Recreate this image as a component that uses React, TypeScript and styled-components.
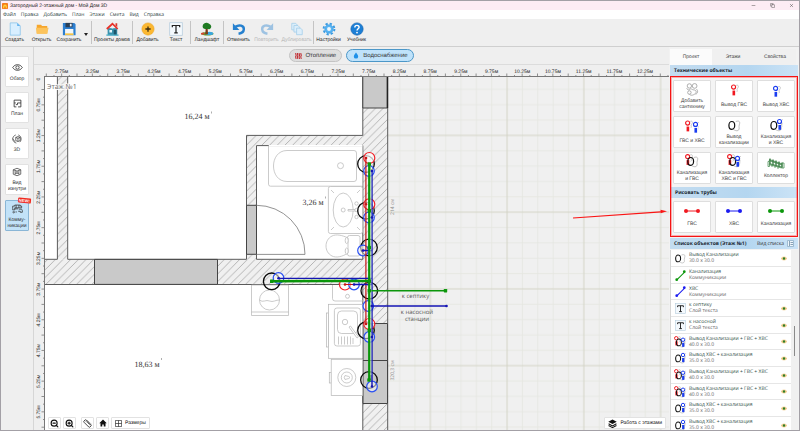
import React from "react";
import styled, { createGlobalStyle, css } from "styled-components";
import { ZoomIn, ZoomOut, Ruler, Minus, Copy, X } from "lucide-react";

const Global = createGlobalStyle`
  *, *::before, *::after { box-sizing: border-box; }
  html, body, #root { height: 100%; }
  body { margin: 0; overflow: hidden; }
  button { font: inherit; color: inherit; margin: 0; padding: 0; border: 0; background: none; cursor: pointer; }
  svg { display: block; flex: none; }
  ul { list-style: none; margin: 0; padding: 0; }
`;

const wideFont = css`font-family: "Open Sans", "Noto Sans", sans-serif;`;

/* ---------- frame ---------- */
const Window = styled.div`
  display: flex;
  flex-direction: column;
  height: 100vh;
  border: 1px solid #a3a0a6;
  background: #efefef;
  color: #333;
  font: 5px/6px "Liberation Sans", Roboto, sans-serif;
  text-rendering: geometricPrecision;
  button { text-rendering: inherit; }
`;
const TitleBar = styled.header`
  display: flex;
  align-items: center;
  height: 9px;
  padding: 0 5px 0 1px;
  gap: 2px;
  background: #fdecf4;
`;
const Title = styled.h1`
  flex: 1;
  margin: 0;
  font-size: 5px;
  font-weight: 400;
  line-height: 8px;
  color: #222;
`;
const WindowButtons = styled.div`
  display: flex;
  gap: 14px;
`;
const MenuBar = styled.nav`
  ${wideFont}
  display: flex;
  align-items: center;
  height: 9px;
  padding: 0 2px;
  gap: 5px;
  background: #fff;
  color: #1f3a3a;
`;
const ToolBar = styled.div`
  display: flex;
  align-items: stretch;
  height: 28px;
  border-bottom: 1px solid #cfcfcf;
  background: #efefef;
`;
const ToolButton = styled.button<{ $width: number }>`
  display: flex;
  flex-direction: column;
  align-items: center;
  width: ${(p) => p.$width}px;
  padding-top: 3px;
  gap: 1px;
  white-space: nowrap;
  color: #222;
  &:disabled { color: #b5b5b5; }
`;
const Separator = styled.span`
  width: 1px;
  margin: 2px 0;
  background: #c4c4c4;
`;
const Caret = styled.button`
  width: 8px;
  padding: 4px 0 0 1px;
`;
const Body = styled.div`
  display: flex;
  flex: 1;
  min-height: 0;
`;

/* ---------- view switcher ---------- */
const Sidebar = styled.nav`
  display: flex;
  flex-direction: column;
  gap: 5px;
  width: 33px;
  padding: 9px 4px;
  border-right: 1px solid #d6d6d6;
`;
const ViewButton = styled.button<{ $active?: boolean }>`
  position: relative;
  display: flex;
  flex-direction: column;
  align-items: center;
  justify-content: center;
  gap: 3px;
  height: 31px;
  border: 1px solid ${(p) => (p.$active ? "#8ab6d6" : "#e2e2e2")};
  border-radius: 1px;
  background: ${(p) => (p.$active ? "#c2e2f8" : "#fff")};
`;
const NewBadge = styled.span`
  position: absolute;
  top: -3px;
  right: -3px;
  padding: 0 1px;
  border-radius: 1px;
  background: #f02a20;
  color: #fff;
  font-size: 4px;
  font-weight: 700;
  line-height: 5px;
  transform: rotate(6deg);
`;

/* ---------- drawing area ---------- */
const Stage = styled.main`
  display: flex;
  flex-direction: column;
  flex: 1;
  min-width: 0;
`;
const LayerBar = styled.div`
  display: flex;
  justify-content: center;
  align-items: center;
  gap: 4px;
  height: 18px;
  border-bottom: 1px solid #dcdcdc;
`;
const Pill = styled.button<{ $active?: boolean }>`
  display: flex;
  align-items: center;
  gap: 3px;
  height: 13px;
  padding: 0 5px;
  border: 1px solid ${(p) => (p.$active ? "#4c97c8" : "#c4c4c4")};
  border-radius: 7px;
  background: ${(p) => (p.$active ? "#bfe2fa" : "#dedede")};
  font-size: 6px;
  line-height: 8px;
  color: #333;
`;
const TopRuler = styled.div`
  height: 12px;
  border-bottom: 1px solid #777;
  margin-left: 10px;
`;
const RulerSvg = styled.svg`
  width: 100%;
  height: 100%;
`;
const PlanRow = styled.div`
  display: flex;
  flex: 1;
  min-height: 0;
`;
const SideRuler = styled.div`
  width: 11px;
  border-right: 1px solid #777;
`;
const PlanArea = styled.div`
  position: relative;
  flex: 1;
  min-width: 0;
  overflow: hidden;
`;
const PlanSvg = styled.svg`
  ${wideFont}
  width: 100%;
  height: 100%;
`;
const FloatingTools = styled.div<{ $side: "left" | "right" }>`
  position: absolute;
  bottom: 1px;
  ${(p) => (p.$side === "left" ? css`left: 3px;` : css`right: 3px;`)}
  display: flex;
  gap: 2px;
`;
const FloatButton = styled.button<{ $spaced?: boolean; $labelled?: boolean }>`
  display: flex;
  align-items: center;
  justify-content: center;
  gap: 3px;
  height: 12px;
  width: ${(p) => (p.$labelled ? "auto" : "13px")};
  padding: ${(p) => (p.$labelled ? "0 3px" : "0")};
  margin-left: ${(p) => (p.$spaced ? 3 : 0)}px;
  border: 1px solid #e2e2e2;
  border-radius: 1px;
  background: #fff;
  color: #111;
`;

/* ---------- project panel ---------- */
const Panel = styled.aside`
  display: flex;
  flex-direction: column;
  width: 130px;
  padding: 2px 1px 0 1px;
  background: #f2f2f2;
`;
const Tabs = styled.div`
  display: grid;
  grid-template-columns: repeat(3, 1fr);
  height: 16px;
  margin-right: 2px;
`;
const Tab = styled.button<{ $active?: boolean }>`
  background: ${(p) => (p.$active ? "#fbfbfb" : "#f0f0f0")};
  color: #444;
`;
const SectionHead = styled.div`
  display: flex;
  align-items: center;
  justify-content: space-between;
  height: 11px;
  padding: 0 4px;
  background: linear-gradient(90deg, #c3dcf0, #b4d6f0 60%, #cbe3f6);
`;
const SectionTitle = styled.h2`
  ${wideFont}
  margin: 0;
  font-size: 5px;
  font-weight: 700;
  line-height: 8px;
  color: #16242e;
`;
const Highlighted = styled.section`
  border: 1px solid #f51414;
  outline: 1px solid rgba(255, 40, 40, 0.35);
  outline-offset: -2px;
`;
const CardGrid = styled.div`
  display: grid;
  grid-template-columns: repeat(3, 1fr);
  gap: 4px;
  padding: 3px 2px;
  background: #f4f4f4;
`;
const Card = styled.button`
  display: flex;
  flex-direction: column;
  align-items: center;
  justify-content: space-evenly;
  height: 32px;
  border: 1px solid #dedede;
  border-radius: 1px;
  background: #fff;
  color: #444;
`;
const ListHead = styled(SectionHead)`
  margin-top: 1px;
`;
const ListMode = styled.button`
  ${wideFont}
  display: flex;
  align-items: center;
  gap: 3px;
`;
const ListArea = styled.div`
  ${wideFont}
  display: flex;
  flex: 1;
  min-height: 0;
  margin-top: 1px;
  background: #f0f0f0;
`;
const ObjectList = styled.ul`
  flex: 1;
  overflow: hidden;
  border-left: 1px solid #d5d5d5;
  background: #fff;
`;
const ObjectRow = styled.li`
  display: flex;
  align-items: center;
  height: 17px;
  padding: 0 4px 0 3px;
  gap: 3px;
  border-bottom: 1px solid #e6e6e6;
  &:nth-child(3n) { height: 16px; }
`;
const ObjectIcon = styled.span`
  display: flex;
  justify-content: center;
  width: 12px;
`;
const ObjectText = styled.div`
  flex: 1;
  white-space: nowrap;
`;
const ObjectName = styled.div`
  color: #33524a;
`;
const ObjectNote = styled.div`
  color: #666;
`;
const ScrollTrack = styled.div`
  width: 7px;
  padding: 76px 3px 0;
`;
const ScrollThumb = styled.div`
  height: 30px;
  background: #8a8a8a;
`;

/* ---------- icons ---------- */
const Svg16 = ({ size = 14, children }: { size?: number; children: React.ReactNode }) => (
  <svg width={size} height={size} viewBox="0 0 16 16" fill="none" aria-hidden="true">{children}</svg>
);

const NewFileIcon = () => (
  <Svg16><path d="M2.500 1h8l3.500 3.500V15h-11.500z" fill="#d9efff" stroke="#7dbdea" strokeWidth="0.800" /><path d="M10.500 1v3.500H14z" fill="#63b4f0" /></Svg16>
);
const FolderIcon = () => (
  <Svg16><path d="M2 3h5l1 1.500h6V13H2z" fill="#f6a62c" /><path d="M1 6.500h14.500L14 13.500H2z" fill="#fcc35c" /></Svg16>
);
const DiskIcon = () => (
  <Svg16><path d="M1 1h13l1.500 1.500V15H1z" fill="#2c7fd0" /><path d="M4 1h8v5H4z" fill="#2b3f55" /><path d="M9 2h2v3H9z" fill="#e8f2fa" /><path d="M3.500 8h9.500v7H3.500z" fill="#f2f6fa" /><path d="M3.500 13h9.500v2H3.500z" fill="#f4c244" /></Svg16>
);
const HouseIcon = () => (
  <Svg16><path d="M3 7h11v8H3z" fill="#3a92ad" /><path d="M2 8 8.500 2l6 6" stroke="#e8332a" strokeWidth="2" /><path d="M12 1.500h2V6l-2-2z" fill="#d8382c" /><path d="M5 9h3v3H5zM7.500 5.500h2v2h-2z" fill="#e6f6fb" /><path d="M10 9h3v6h-3z" fill="#1d566b" /><path d="M1.500 15h14" stroke="#4eb0c9" strokeWidth="1.500" /></Svg16>
);
const AddIcon = () => (
  <Svg16><circle cx="8" cy="8" r="7" fill="#fbb832" stroke="#e9a01c" strokeWidth="0.600" /><path d="M8 5v6M5 8h6" stroke="#3b2c10" strokeWidth="1.500" /></Svg16>
);
const LetterT = ({ size = 14 }: { size?: number }) => (
  <Svg16 size={size}><rect x="0.800" y="0.800" width="14.400" height="14.400" fill="#f4f9fd" stroke="#b6cddd" strokeWidth="0.900" /><path d="M3.800 6V4h8.400v2M8 4v8.500M6 12.500h4" stroke="#222" strokeWidth="1.400" /></Svg16>
);
const LandscapeIcon = () => (
  <Svg16><ellipse cx="8.500" cy="13.500" rx="7" ry="2" fill="#5d9a2f" /><ellipse cx="11" cy="13" rx="4" ry="1.800" fill="#39a6df" /><path d="M6.500 7h2.200l.5 7H6z" fill="#7a3c18" /><path d="M3 5c0-3 3-4.500 5.500-4S14 4 12.500 6.500 9.500 8 8 8 3 8 3 5z" fill="#1f7a22" /><path d="M1 12.500l3.500-.5 1 2-4 .5z" fill="#d9432e" /></Svg16>
);
const UndoIcon = ({ flip, faded }: { flip?: boolean; faded?: boolean }) => (
  <Svg16><g transform={flip ? "matrix(-1 0 0 1 16 0)" : undefined} opacity={faded ? 0.4 : 1}><path d="M4 5.500C8 2.500 14 4 13.500 8.500 13.300 11.500 10.500 13 7.500 13.500" stroke="#2580cf" strokeWidth="2.800" /><path d="M1 1.500v7.500h7.500z" fill="#2580cf" /></g></Svg16>
);
const DuplicateIcon = () => (
  <Svg16><g fill="#dceefa" stroke="#a3cfea" strokeWidth="0.900"><path d="M2 1.500h4.500l2 2V9H2z" /><path d="M4.500 4H9l2 2v5.500H4.500z" /><path d="M7.500 7h4.500l2 2v5.500H7.500z" /></g></Svg16>
);
const GearIcon = () => (
  <Svg16><circle cx="8" cy="8" r="6.200" stroke="#3a9be2" strokeWidth="2.200" strokeDasharray="2.600 2.270" /><circle cx="8" cy="8" r="4.800" fill="#58b4f2" stroke="#3a9be2" strokeWidth="0.800" /><circle cx="8" cy="8" r="2.200" fill="#eef7fd" /></Svg16>
);
const HelpIcon = () => (
  <Svg16><circle cx="8" cy="8" r="7" fill="#1c7fd6" stroke="#1566b2" strokeWidth="0.800" /><path d="M5.500 6.200C5.500 3 10.500 3.200 10.400 6 10.300 7.600 8 7.800 8 9.700" stroke="#fff" strokeWidth="1.700" /><circle cx="8" cy="12" r="1" fill="#fff" /></Svg16>
);
const AppIcon = () => (
  <Svg16 size={6}><rect width="16" height="16" rx="2" fill="#f57c1a" /><path d="M3 14V7l5-4 5 4v7h-3V9H6v5z" fill="#ffd23c" /></Svg16>
);

const EyeIcon = () => (
  <Svg16 size={11}><g stroke="#333" strokeWidth="1.200"><path d="M1 8c3.500-5.500 10.500-5.500 14 0-3.500 5.500-10.500 5.500-14 0z" /><circle cx="8" cy="8" r="2.400" /></g></Svg16>
);
const PlanIcon = () => (
  <Svg16 size={9}><path d="M2 2h12v12H9M2 2v12h4M2 7h3M8 7h6M8 7v3M5 10h3" stroke="#333" strokeWidth="1.500" /></Svg16>
);
const CubeOrbitIcon = () => (
  <Svg16 size={10}><g stroke="#333" strokeWidth="1.100"><path d="M6 5.500 9.500 4 13 5.500v5L9.500 12 6 10.500zM6 5.500 9.500 7 13 5.500M9.500 7v5" /><path d="M6 1.500C-1 4 0 13 7 14.500M10 1.500c5 1.500 6 8 2.500 11.500M1 7.500l4 5" /></g></Svg16>
);
const RoomIcon = () => (
  <Svg16 size={10}><g stroke="#333" strokeWidth="1.100"><path d="M2 4.500 8 2l6 2.500v7L8 14l-6-2.500zM2 4.500l6 2 6-2M5 6v6M11 6v6M5 10h6M8 6.500V10" /></g></Svg16>
);
const PipesIcon = () => (
  <Svg16 size={11}><g stroke="#333" strokeWidth="1.100"><path d="M1 8V4.500h3V3h8v1.500h2V7H4v3H1zM6 3v4M10 3v4M4 8.500h5M10 9h3.500c1 0 1.500 1 1.500 2v2.500h-3V12H9M2 12c-1 1.500-.5 2.500.5 2.500s1.500-1 .5-2.500M6 12v2" /></g></Svg16>
);
const HeatIcon = () => (
  <svg width="7" height="6" viewBox="0 0 16 14" aria-hidden="true"><path d="M2 0c-2 3 2 4 0 7s1 4 0 7M6 0c-2 3 2 4 0 7s1 4 0 7M10 0c-2 3 2 4 0 7s1 4 0 7M14 0c-2 3 2 4 0 7s1 4 0 7" fill="none" stroke="#c0272d" strokeWidth="2.400" /></svg>
);
const DropIcon = () => (
  <svg width="8" height="7" viewBox="-2 0 16 16" aria-hidden="true"><path d="M6 1c2 3.500 5 5.500 5 9a5 5 0 0 1-10 0c0-3.500 3-5.500 5-9z" fill="#1e90e8" /></svg>
);
const HomeSolid = () => (
  <Svg16 size={8}><path d="M8 1 15.500 8.500H13V15H9.500v-4h-3v4H3V8.500H.5z" fill="#111" /></Svg16>
);
const SizesIcon = () => (
  <Svg16 size={7}><path d="M1 1h14v14H1zM8 1v14M1 8h14" stroke="#222" strokeWidth="1.500" /></Svg16>
);
const LayersSolid = () => (
  <Svg16 size={9}><path d="M8 1l7.500 4L8 9 .5 5z" fill="#111" /><path d="M1 8.500l7 3.800 7-3.800M1 11.500l7 3.800 7-3.800" stroke="#111" strokeWidth="1.800" /></Svg16>
);
const VisibleIcon = () => (
  <svg width="6" height="5" viewBox="0 0 12 10" aria-hidden="true"><path d="M0 5C3 1 9 1 12 5 9 9 3 9 0 5z" fill="#fad9a0" stroke="#e8ae50" strokeWidth="1" /><circle cx="6" cy="5" r="2.400" fill="#2f7d2a" /></svg>
);

type OutletKind = { drain?: boolean; hot?: boolean; cold?: boolean };
const Riser = ({ x, y, color }: { x: number; y: number; color: string }) => (
  <g>
    <path d={`M${x + 3} ${y - 2}c3-1 3 2 1.500 3.500s1 3-1 4`} stroke="#aaa" strokeWidth="0.700" />
    <path d={`M${x - 1.200} ${y + 4}h3v5.500h-3z`} fill={color} />
    <circle cx={x} cy={y} r="2.300" fill="#fff" stroke={color} strokeWidth="1.300" />
  </g>
);
const OutletIcon = ({ drain, hot, cold, size = 14 }: OutletKind & { size?: number }) => {
  const single = !drain && !(hot && cold);
  return (
    <Svg16 size={size}>
      {drain && hot && <Riser x={3} y={3} color="#f01820" />}
      {!drain && hot && <Riser x={single ? 7.500 : 3} y={3.500} color="#f01820" />}
      {drain && <path d="M10 4c5-1.500 5 1 4 4s1 4-1 6c-2 1.500-4 0-6-1" stroke="#a6a6a6" strokeWidth="0.800" />}
      {drain && <ellipse cx={hot ? 6.500 : 5.500} cy="8.500" rx="3.300" ry="4.500" stroke="#111" strokeWidth="1.400" />}
      {cold && <Riser x={single ? 7.500 : 12} y={drain && !hot ? 4 : 5} color="#1b3df0" />}
    </Svg16>
  );
};
const PlumbingIcon = () => (
  <Svg16><g stroke="#999" strokeWidth="0.900"><circle cx="5" cy="4.500" r="2.500" /><circle cx="11" cy="4.500" r="2.700" /><path d="M2 7c1 3 3 2 4 1s2 1 4 1 4 2 2 4-5 3-7 1M13 8c2 2 2 5-1 6" /><circle cx="5" cy="12" r="2" /></g></Svg16>
);
const ManifoldIcon = () => (
  <svg width="18" height="13" viewBox="0 0 18 13" fill="none" aria-hidden="true">
    <path d="M2 3l13 4.500M2 7l13 3.500" stroke="#6aa172" strokeWidth="2" />
    <path d="M3 1.500V7M6 2.500V8M9 3.500V9M12 4.500V10M15 5.500v5" stroke="#3d7f47" strokeWidth="1.300" />
    <path d="M1 4.500h1.500v5H1zM5 7v3M8 8v3M11 9v3M15 6h2v5h-2z" stroke="#4f9159" strokeWidth="0.800" />
  </svg>
);
const PipeIcon = ({ color }: { color: string }) => (
  <svg width="18" height="8" viewBox="0 0 18 8" aria-hidden="true"><path d="M2 4h14" stroke={color} strokeWidth="1" /><circle cx="3" cy="4" r="2" fill={color} /><circle cx="15" cy="4" r="2" fill={color} /></svg>
);
const DiagonalPipe = ({ color }: { color: string }) => (
  <Svg16 size={11}><path d="M3 14 14 3" stroke={color} strokeWidth="1.500" /><circle cx="2.500" cy="14" r="2" fill={color} /><circle cx="13.500" cy="2.500" r="2" fill={color} /></Svg16>
);

/* ---------- rulers ---------- */
const STEP = 30.7;
const HorizontalRuler = () => (
  <TopRuler>
    <RulerSvg>
      {Array.from({ length: 82 }, (_, i) => {
        const x = 2.300 + (i * STEP) / 4;
        return <path key={i} d={`M${x} ${i % 2 ? 10 : 8.500}V12`} stroke="#666" strokeWidth="0.700" />;
      })}
      {Array.from({ length: 20 }, (_, i) => (
        <text key={i} x={17.700 + i * STEP} y="8" textAnchor="middle" fontSize="5" fill="#222">{(2.75 + i * 0.5).toFixed(2)}м</text>
      ))}
    </RulerSvg>
  </TopRuler>
);
const VerticalRuler = () => (
  <SideRuler>
    <RulerSvg>
      {Array.from({ length: 48 }, (_, i) => {
        const y = 12.500 + (i * STEP) / 4;
        return <path key={i} d={`M${i % 2 ? 9 : 7.500} ${y}H11`} stroke="#666" strokeWidth="0.700" />;
      })}
      <text transform="translate(6 2) rotate(-90)" textAnchor="middle" fontSize="5" fill="#222">0</text>
      {Array.from({ length: 11 }, (_, i) => (
        <text key={i} transform={`translate(6 ${28 + i * STEP}) rotate(-90)`} textAnchor="middle" fontSize="5" fill="#222">{(0.75 + i * 0.5).toFixed(2)}м</text>
      ))}
    </RulerSvg>
  </SideRuler>
);

/* ---------- floor plan ---------- */
const drains = [[366, 164], [366, 210.7], [369, 247.5], [271.7, 281.3], [369.3, 290.7], [366, 330.3], [369, 380]];
const hotOutlets = [[369.3, 158], [369.3, 204.3], [345, 284.5], [369.3, 324]];
const coldOutlets = [[369, 171], [369, 217.5], [363, 250.5], [278.5, 278], [354, 284.5], [368.3, 306], [369.3, 337], [372, 386.5]];
const greenJoints = [[369.3, 164], [369.3, 210.7], [369.3, 247.5], [271.7, 281.3], [369.3, 281], [369.3, 290.7], [369.3, 330.3], [369, 380], [445.5, 290.7]];
const blueJoints = [[372, 171], [372, 217.5], [363, 250.5], [278.5, 278.3], [354, 284.5], [372, 306], [372, 337], [372, 386.5], [446.5, 306]];
const redJoints = [[366, 158], [366, 204.3], [345, 284.5], [366, 324]];

const FloorPlan = () => (
  <PlanSvg role="img" aria-label="План этажа">
    <defs>
      <pattern id="grid" x="46.600" y="58.650" width="76.750" height="76.750" patternUnits="userSpaceOnUse">
        {[1, 2, 3, 4].map((n) => (
          <path key={n} d={`M${n * 15.350} 0V76.750M0 ${n * 15.350}H76.750`} stroke="#e5e6e0" strokeWidth="0.800" />
        ))}
        <path d="M0 0V76.750M0 0H76.750M76.750 0V76.750M0 76.750H76.750" stroke="#d3d4c6" strokeWidth="1" />
      </pattern>
      <pattern id="hatch" width="7.680" height="7.680" patternUnits="userSpaceOnUse">
        <rect width="7.680" height="7.680" fill="#f0f0f0" />
        <path d="M-1 8.680 8.680-1M-1 1 1-1M6.680 8.680l2-2" stroke="#8c8c8c" strokeWidth="0.600" />
      </pattern>
    </defs>
    <g transform="translate(-45 -77)" fill="none">
      <rect x="45" y="77" width="4000" height="4000" fill="#f0f0f0" />
      <rect x="45" y="77" width="4000" height="4000" fill="url(#grid)" />
      <rect x="45" y="77" width="318" height="4000" fill="#fff" />

      {/* walls */}
      <g fill="url(#hatch)">
        <path d="M57.500 77h10.200v182.500H57.500z" />
        <path d="M45 259.400h318v25H45z" />
        <path d="M246.500 135.400h116.300v10.200H256.500v114h-10z" />
        <path d="M362.800 77h25v4000h-25z" />
      </g>
      <g stroke="#5a5a5a" strokeWidth="1">
        <path d="M57.400 77v182.300H45M67.700 77v182.300h178.800V135.400h116.300V77" />
        <path d="M362.800 145.600H256.500v113.700h106.300V145.600" />
        <path d="M45 284.500h317.800V4000M387.700 77v4000" />
      </g>
      <g fill="#c9c9c9" stroke="#444" strokeWidth="1">
        <path d="M94.500 259.400h123v25h-123z" />
        <path d="M246.500 205.300h10v49h-10z" />
        <path d="M362.800 76h24.700v32h-24.700z" />
        <path d="M363 323.500h24.500v37H363zM363 360.500h24.500v43H363z" />
      </g>
      <path d="M387.400 77v31" stroke="#222" strokeWidth="1.500" />

      {/* door */}
      <path d="M256.500 205.300A48.500 49 0 0 1 305 254.400h-48.500" stroke="#777" strokeWidth="0.800" />

      {/* bathroom */}
      <g stroke="#b4b4b4" strokeWidth="0.700" fill="#fff">
        <path d="M268.500 145.800h94v40.400h-92q-2 0-2-2z" />
        <path d="M287 150.500h67q2.500 0 2.500 2.500v26q0 2.500-2.500 2.500h-67c-18 0-18-31 0-31z" />
        <circle cx="340.500" cy="165.700" r="3" />
        <rect x="328.400" y="186.500" width="34.200" height="47" rx="2" />
        <ellipse cx="343.200" cy="210" rx="10" ry="17" />
        <circle cx="343.200" cy="210" r="2" />
        <path d="M348 209.500h9v1.500h-9zM331 190l3 3M331 230l3-3M360 190l-3 3M360 230l-3-3" />
        <circle cx="356.500" cy="203.500" r="1.700" /><circle cx="356.500" cy="210" r="1.700" /><circle cx="356.500" cy="217" r="1.700" />
        <rect x="347.500" y="235.500" width="12.500" height="20.500" rx="2" />
        <path d="M348 238c-6-3-12-4-16-2-8 4-8 16 0 20 4 2 10 1 16-3z" />
        <ellipse cx="346.700" cy="240.500" rx="1.500" ry="3" /><ellipse cx="346.700" cy="251" rx="1.500" ry="3" />
      </g>
      <path d="M269 145.600h93.500" stroke="#fff" strokeWidth="1.200" />

      {/* kitchen */}
      <g stroke="#b4b4b4" strokeWidth="0.700" fill="#fff">
        <path d="M251.500 285h37v30.500h-37zM251.500 312h37" />
        <circle cx="269.500" cy="300" r="10" />
        <path d="M259.500 300q2.500 2 5 1t5 0 5 0 5-1" />
        <path d="M332.500 285v13.500q0 2.500 2.500 2.500h27.700" />
        <circle cx="347.500" cy="296.300" r="2" />
        <rect x="326.500" y="313" width="2" height="34" />
        <rect x="328.400" y="304.300" width="34.200" height="54" />
        <rect x="334.400" y="308" width="26" height="38" rx="2.500" />
        <rect x="337.500" y="311" width="20" height="22.500" rx="4" />
        <circle cx="345" cy="322" r="2.700" />
        <path d="M349 327l1.500-1 8 11-1.500 1zM338.500 336.500v8M341.500 336.500v8M344.500 336.500v8M347.500 336.500v8M350.500 336.500v8M353 338v6" />
        <rect x="329.300" y="372.500" width="2" height="10.500" />
        <rect x="331.200" y="359.300" width="31.500" height="36.200" />
        <circle cx="346.800" cy="377.500" r="9" /><circle cx="346.800" cy="377.500" r="5.500" />
        <path d="M345 375.500q5 1 5 2t-5 2q-1.500-2 0-4z" />
      </g>

      {/* pipes */}
      {drains.map(([cx, cy]) => <circle key={`${cx}-${cy}`} cx={cx} cy={cy} r="8.300" stroke="#0b0b0b" strokeWidth="1.300" />)}
      {hotOutlets.map(([cx, cy]) => <circle key={`${cx}-${cy}`} cx={cx} cy={cy} r="5.500" fill="#fff" fillOpacity="0.7" stroke="#f22028" strokeWidth="1.200" />)}
      {coldOutlets.map(([cx, cy]) => <circle key={`${cx}-${cy}`} cx={cx} cy={cy} r="5.300" fill="#fff" fillOpacity="0.5" stroke="#2a50f2" strokeWidth="1.200" />)}
      <path d="M365.900 158v166M345 284.500h21" stroke="#c81414" strokeWidth="1.200" />
      <path d="M372 171v215.500M278.500 278.400H372M354 284.500h18M370 306h76.500M363 250.500h9" stroke="#1515b4" strokeWidth="1.400" />
      <path d="M369.300 164v216M271.700 281.300l97.600-.5" stroke="#0b960b" strokeWidth="2.400" />
      <path d="M369.300 290.700h76.200" stroke="#0b960b" strokeWidth="1.600" />
      <path d="M370.900 170v205" stroke="#d4f2d4" strokeWidth="0.700" />
      {greenJoints.map(([x, y]) => <rect key={`${x}-${y}`} x={x - 1.700} y={y - 1.700} width="3.400" height="3.400" rx="0.600" fill="#0b960b" />)}
      {blueJoints.map(([x, y]) => <circle key={`${x}-${y}`} cx={x} cy={y} r="1.300" fill="#1515b4" />)}
      {redJoints.map(([x, y]) => <circle key={`${x}-${y}`} cx={x} cy={y} r="1.300" fill="#c81414" />)}

      {/* labels */}
      <text x="47" y="88.500" fontSize="7" fill="#666" stroke="#fff" strokeWidth="1.500" paintOrder="stroke">Этаж №1</text>
      <g fill="#333" fontSize="8" fontFamily="'Liberation Serif', serif">
        <text x="184.500" y="119">16,24 м</text>
        <text x="302.500" y="205">3,26 м</text>
        <text x="134.500" y="366.500">18,63 м</text>
      </g>
      <path d="M211.500 111.500v2M325.500 196.500v2M161.500 358v2" stroke="#777" strokeWidth="0.600" />
      <g fill="#555" fontSize="6" textAnchor="middle">
        <text x="415.500" y="298">к септику</text>
        <text x="417" y="314">к насосной</text>
        <text x="417" y="321">станции</text>
        <text fill="#888" fontSize="5" transform="translate(394 207) rotate(-90)">214 см</text>
        <text fill="#888" fontSize="5" transform="translate(394 370.500) rotate(-90)">320,3 см</text>
      </g>

      {/* pointer */}
      <path d="M573 218l88-6.200" stroke="#fa1414" strokeWidth="1.200" />
      <path d="M660.500 209.800l6.500 1.400-6.200 2z" fill="#fa1414" />
    </g>
  </PlanSvg>
);

/* ---------- data ---------- */
const menu = ["Файл", "Правка", "Добавить", "План", "Этажи", "Смета", "Вид", "Справка"];

const views = [
  { icon: <EyeIcon />, label: ["Обзор"] },
  { icon: <PlanIcon />, label: ["План"] },
  { icon: <CubeOrbitIcon />, label: ["3D"] },
  { icon: <RoomIcon />, label: ["Вид", "изнутри"] },
  { icon: <PipesIcon />, label: ["Комму-", "никации"], active: true },
];

const objects = [
  { icon: <PlumbingIcon />, label: ["Добавить", "сантехнику"] },
  { icon: <OutletIcon hot />, label: ["Вывод ГВС"] },
  { icon: <OutletIcon cold />, label: ["Вывод ХВС"] },
  { icon: <OutletIcon hot cold />, label: ["ГВС и ХВС"] },
  { icon: <OutletIcon drain />, label: ["Вывод", "канализации"] },
  { icon: <OutletIcon drain cold />, label: ["Канализация", "и ХВС"] },
  { icon: <OutletIcon drain hot />, label: ["Канализация", "и ГВС"] },
  { icon: <OutletIcon drain hot cold />, label: ["Канализация", "ХВС и ГВС"] },
  { icon: <ManifoldIcon />, label: ["Коллектор"] },
];

const pipes = [
  { color: "#f01820", label: "ГВС" },
  { color: "#1b1bf0", label: "ХВС" },
  { color: "#0b960b", label: "Канализация" },
];

const allOutlets = { icon: <OutletIcon drain hot cold size={12} />, name: "Вывод Канализации + ГВС + ХВС", note: "40.0 x 30.0", eye: true };
const coldOutlet = { icon: <OutletIcon drain cold size={12} />, name: "Вывод ХВС + канализация", note: "35.0 x 30.0", eye: true };
const listed = [
  { icon: <OutletIcon drain size={12} />, name: "Вывод Канализации", note: "30.0 x 30.0", eye: true },
  { icon: <DiagonalPipe color="#0b960b" />, name: "Канализация", note: "Коммуникации" },
  { icon: <DiagonalPipe color="#1b1bf0" />, name: "ХВС", note: "Коммуникации" },
  { icon: <LetterT size={11} />, name: "к септику", note: "Слой текста", eye: true },
  { icon: <LetterT size={11} />, name: "к насосной", note: "Слой текста", eye: true },
  allOutlets, coldOutlet, allOutlets, allOutlets, coldOutlet, coldOutlet,
];

const Lines = ({ of }: { of: string[] }) => (
  <span>{of.map((line) => <React.Fragment key={line}>{line}<br /></React.Fragment>)}</span>
);

export default function App() {
  return (
    <>
      <Global />
      <Window>
        <TitleBar>
          <AppIcon />
          <Title>Загородный 2-этажный дом - Мой Дом 3D</Title>
          <WindowButtons>
            <button aria-label="Свернуть"><Minus size={5} /></button>
            <button aria-label="Свернуть в окно"><Copy size={5} /></button>
            <button aria-label="Закрыть"><X size={5} /></button>
          </WindowButtons>
        </TitleBar>
        <MenuBar>{menu.map((m) => <button key={m}>{m}</button>)}</MenuBar>
        <ToolBar>
          <ToolButton $width={27}><NewFileIcon />Создать</ToolButton>
          <ToolButton $width={27}><FolderIcon />Открыть</ToolButton>
          <ToolButton $width={28}><DiskIcon />Сохранить</ToolButton>
          <Caret aria-label="Варианты сохранения">
            <svg width="4" height="3" viewBox="0 0 4 3"><path d="M0 0h4L2 3z" fill="#222" /></svg>
          </Caret>
          <Separator />
          <ToolButton $width={40}><HouseIcon />Проекты домов</ToolButton>
          <Separator />
          <ToolButton $width={29}><AddIcon />Добавить</ToolButton>
          <ToolButton $width={28}><LetterT />Текст</ToolButton>
          <Separator />
          <ToolButton $width={32}><LandscapeIcon />Ландшафт</ToolButton>
          <Separator />
          <ToolButton $width={29}><UndoIcon />Отменить</ToolButton>
          <ToolButton $width={27} disabled><UndoIcon flip faded />Повторить</ToolButton>
          <ToolButton $width={33} disabled><DuplicateIcon />Дублировать</ToolButton>
          <Separator />
          <ToolButton $width={29}><GearIcon />Настройки</ToolButton>
          <ToolButton $width={27}><HelpIcon />Учебник</ToolButton>
        </ToolBar>
        <Body>
          <Sidebar>
            {views.map((v) => (
              <ViewButton key={v.label[0]} $active={v.active}>
                {v.icon}
                <Lines of={v.label} />
                {v.active && <NewBadge>NEW!</NewBadge>}
              </ViewButton>
            ))}
          </Sidebar>
          <Stage>
            <LayerBar>
              <Pill><HeatIcon />Отопление</Pill>
              <Pill $active><DropIcon />Водоснабжение</Pill>
            </LayerBar>
            <HorizontalRuler />
            <PlanRow>
              <VerticalRuler />
              <PlanArea>
                <FloorPlan />
                <FloatingTools $side="left">
                  <FloatButton aria-label="Уменьшить"><ZoomOut size={9} strokeWidth={3} /></FloatButton>
                  <FloatButton aria-label="Увеличить"><ZoomIn size={9} strokeWidth={3} /></FloatButton>
                  <FloatButton $spaced aria-label="Линейка"><Ruler size={9} /></FloatButton>
                  <FloatButton aria-label="Весь план"><HomeSolid /></FloatButton>
                  <FloatButton $labelled><SizesIcon />Размеры</FloatButton>
                </FloatingTools>
                <FloatingTools $side="right">
                  <FloatButton $labelled><LayersSolid />Работа с этажами</FloatButton>
                </FloatingTools>
              </PlanArea>
            </PlanRow>
          </Stage>
          <Panel>
            <Tabs role="tablist">
              <Tab role="tab" aria-selected="true" $active>Проект</Tab>
              <Tab role="tab" aria-selected="false">Этажи</Tab>
              <Tab role="tab" aria-selected="false">Свойства</Tab>
            </Tabs>
            <SectionHead><SectionTitle>Технические объекты</SectionTitle></SectionHead>
            <Highlighted>
              <CardGrid>
                {objects.map((o) => (
                  <Card key={o.label.join(" ")}>
                    {o.icon}
                    <Lines of={o.label} />
                  </Card>
                ))}
              </CardGrid>
              <SectionHead><SectionTitle>Рисовать трубы</SectionTitle></SectionHead>
              <CardGrid>
                {pipes.map((p) => <Card key={p.label}><PipeIcon color={p.color} />{p.label}</Card>)}
              </CardGrid>
            </Highlighted>
            <ListHead>
              <SectionTitle>Список объектов (Этаж №1)</SectionTitle>
              <ListMode>
                Вид списка
                <svg width="7" height="7" viewBox="0 0 7 7" aria-hidden="true"><path d="M.5.5h6v6h-6z" fill="#eef6fc" stroke="#8fb0c8" strokeWidth="0.800" /><path d="M2.500 1v5M3.500 2.500H6M3.500 4.500H6" stroke="#5b7d96" strokeWidth="0.700" /></svg>
              </ListMode>
            </ListHead>
            <ListArea>
              <ObjectList>
                {listed.map((row, i) => (
                  <ObjectRow key={i}>
                    <ObjectIcon>{row.icon}</ObjectIcon>
                    <ObjectText>
                      <ObjectName>{row.name}</ObjectName>
                      <ObjectNote>{row.note}</ObjectNote>
                    </ObjectText>
                    {row.eye && <button aria-label="Видимость"><VisibleIcon /></button>}
                  </ObjectRow>
                ))}
              </ObjectList>
              <ScrollTrack><ScrollThumb /></ScrollTrack>
            </ListArea>
          </Panel>
        </Body>
      </Window>
    </>
  );
}
